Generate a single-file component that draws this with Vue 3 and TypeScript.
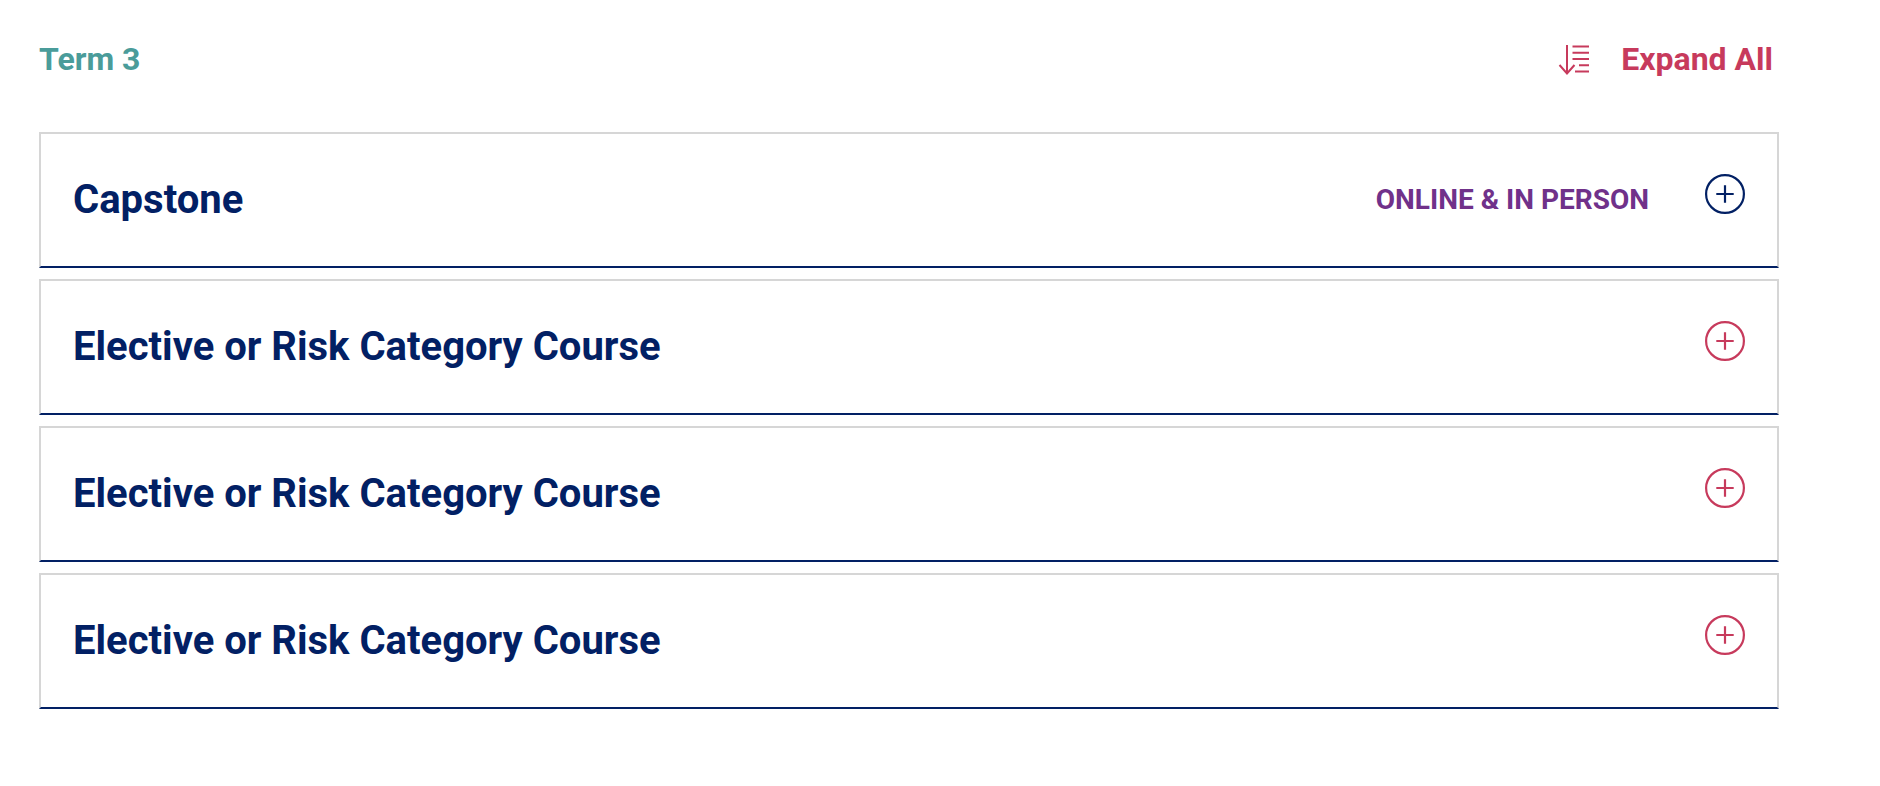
<script setup lang="ts">
import { ref } from 'vue'

interface Course {
  id: number
  title: string
  format?: string
}

const courses: Course[] = [
  { id: 1, title: 'Capstone', format: 'Online & In Person' },
  { id: 2, title: 'Elective or Risk Category Course' },
  { id: 3, title: 'Elective or Risk Category Course' },
  { id: 4, title: 'Elective or Risk Category Course' },
]

const active = ref(1)
</script>

<template>
  <main class="term">
    <header class="term-header">
      <h2 class="term-title">Term 3</h2>
      <button type="button" class="expand">
        <svg class="expand-icon" viewBox="0 0 32 32" aria-hidden="true">
          <path d="M9 2V31M1.5 22L9 30.5L16.5 22M14.5 3.5H31M14.5 9.7H31M14.5 16H31M21 22.2H31M17 28.5H31" />
        </svg>
        <span>Expand All</span>
      </button>
    </header>
    <ul class="courses">
      <li v-for="course in courses" :key="course.id">
        <button
          type="button"
          class="course"
          :class="{ active: active === course.id }"
          @click="active = course.id"
        >
          <span class="course-title">{{ course.title }}</span>
          <span v-if="course.format" class="course-format">{{ course.format }}</span>
          <svg class="plus" viewBox="0 0 40 40" aria-hidden="true">
            <circle cx="20" cy="20" r="18.9" />
            <path d="M20 11.3V28.7M11.3 20H28.7" />
          </svg>
        </button>
      </li>
    </ul>
  </main>
</template>

<style scoped>
.term {
  padding: 39px 101px 40px 39px;
  font-family: Roboto, "Liberation Sans", sans-serif;
}
.term-header {
  display: flex;
  justify-content: space-between;
  align-items: center;
  padding-right: 6px;
  margin-bottom: 53px;
}
.term-title {
  margin: 0;
  font-size: 32px;
  line-height: 40px;
  font-weight: 700;
  color: #4a9c9a;
}
.expand {
  display: flex;
  align-items: center;
  gap: 31px;
  padding: 0;
  border: 0;
  background: none;
  font: inherit;
  font-size: 32px;
  line-height: 40px;
  font-weight: 700;
  color: #c73a5c;
  cursor: pointer;
}
.expand-icon {
  width: 32px;
  height: 32px;
  fill: none;
  stroke: currentColor;
  stroke-width: 2;
}
.courses {
  display: flex;
  flex-direction: column;
  gap: 11px;
  margin: 0;
  padding: 0;
  list-style: none;
}
.course {
  display: flex;
  align-items: center;
  width: 100%;
  min-height: 136px;
  padding: 0 32px;
  border: 2px solid #d6d6d6;
  border-bottom-color: #022064;
  background: #fff;
  font: inherit;
  text-align: left;
  color: #c73a5c;
  cursor: pointer;
}
.course.active {
  color: #022064;
}
.course-title {
  flex: 1;
  font-size: 40px;
  line-height: 48px;
  font-weight: 700;
  color: #022064;
}
.course-format {
  margin-right: 56px;
  font-size: 28px;
  line-height: 48px;
  font-weight: 700;
  text-transform: uppercase;
  color: #70318a;
}
.plus {
  width: 40px;
  height: 40px;
  margin-bottom: 12px;
  fill: none;
  stroke: currentColor;
  stroke-width: 2.2;
}
</style>
